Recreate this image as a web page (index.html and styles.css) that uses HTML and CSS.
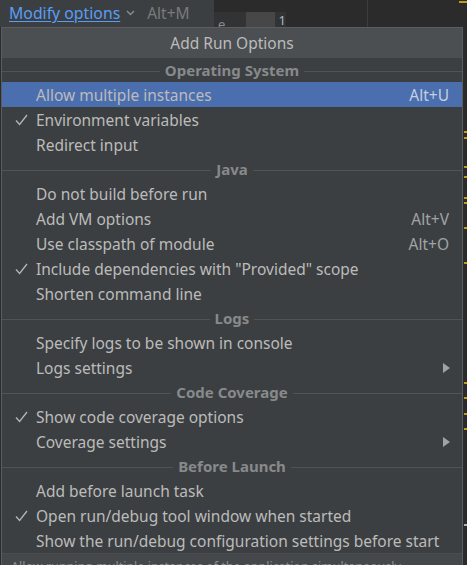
FILE: index.html
```html
<!DOCTYPE html>
<html>
<head>
<meta charset="utf-8">
<link rel="stylesheet" href="styles.css">
</head>
<body>
<div class="screen">
  <div class="topbar">
    <div class="toolpanel">
      <span class="link">Modify options</span>
      <svg class="chev" width="9" height="6" viewBox="0 0 9 6"><path d="M1 1 L4.5 4.5 L8 1" fill="none" stroke="#8a8d90" stroke-width="1.4"/></svg>
      <span class="hint">Alt+M</span>
    </div>
    <div class="editor">
      <div class="field"><span class="glyph">e</span><span class="fill"></span><span class="glyph one">1</span></div>
      <div class="vline"></div>
      <div class="mark top"></div>
    </div>
  </div>
  <div class="rightstrip">
    <i class="y" style="top:104px"></i>
    <i class="y" style="top:110px"></i>
    <i class="y" style="top:139px"></i>
    <i class="y" style="top:149px"></i>
    <i class="y" style="top:170px"></i>
    <i class="y" style="top:175px"></i>
    <i class="y" style="top:200px"></i>
    <i class="y" style="top:235px"></i>
    <i class="y" style="top:355px"></i>
    <i class="y" style="top:370px"></i>
    <i class="y" style="top:386px"></i>
    <i class="y" style="top:401px"></i>
    <i class="w" style="top:497px"></i>
  </div>

  <div class="popup">
    <div class="title">Add Run Options</div>
    <div class="list">
      <div class="sep"><span>Operating System</span></div>
      <div class="item sel"><span class="chk"></span><span class="label">Allow multiple instances</span><span class="key">Alt+U</span></div>
      <div class="item"><span class="chk"><svg width="13" height="12" viewBox="0 0 13 12"><path d="M1 6.5 L4.6 10.5 L12 1" fill="none" stroke="#b4b6b8" stroke-width="1.3"/></svg></span><span class="label">Environment variables</span></div>
      <div class="item"><span class="chk"></span><span class="label">Redirect input</span></div>
      <div class="sep"><span>Java</span></div>
      <div class="item"><span class="chk"></span><span class="label">Do not build before run</span></div>
      <div class="item"><span class="chk"></span><span class="label">Add VM options</span><span class="key">Alt+V</span></div>
      <div class="item"><span class="chk"></span><span class="label">Use classpath of module</span><span class="key">Alt+O</span></div>
      <div class="item"><span class="chk"><svg width="13" height="12" viewBox="0 0 13 12"><path d="M1 6.5 L4.6 10.5 L12 1" fill="none" stroke="#b4b6b8" stroke-width="1.3"/></svg></span><span class="label">Include dependencies with "Provided" scope</span></div>
      <div class="item"><span class="chk"></span><span class="label">Shorten command line</span></div>
      <div class="sep"><span>Logs</span></div>
      <div class="item"><span class="chk"></span><span class="label">Specify logs to be shown in console</span></div>
      <div class="item"><span class="chk"></span><span class="label">Logs settings</span><span class="arrow"></span></div>
      <div class="sep"><span>Code Coverage</span></div>
      <div class="item"><span class="chk"><svg width="13" height="12" viewBox="0 0 13 12"><path d="M1 6.5 L4.6 10.5 L12 1" fill="none" stroke="#b4b6b8" stroke-width="1.3"/></svg></span><span class="label">Show code coverage options</span></div>
      <div class="item"><span class="chk"></span><span class="label">Coverage settings</span><span class="arrow"></span></div>
      <div class="sep"><span>Before Launch</span></div>
      <div class="item"><span class="chk"></span><span class="label">Add before launch task</span></div>
      <div class="item"><span class="chk"><svg width="13" height="12" viewBox="0 0 13 12"><path d="M1 6.5 L4.6 10.5 L12 1" fill="none" stroke="#b4b6b8" stroke-width="1.3"/></svg></span><span class="label">Open run/debug tool window when started</span></div>
      <div class="item"><span class="chk"></span><span class="label">Show the run/debug configuration settings before start</span></div>
    </div>
    <div class="footer">Allow running multiple instances of the application simultaneously.</div>
  </div>
</div>
</body>
</html>
```
FILE: styles.css
```css
html, body {
  margin: 0;
  padding: 0;
  background: #2b2b2b;
}
.screen {
  position: relative;
  width: 467px;
  height: 565px;
  overflow: hidden;
  background: #2b2b2b;
  font-family: "Noto Sans", "Open Sans", sans-serif;
  font-size: 15.5px;
  color: #bbbbbb;
}
.topbar {
  display: flex;
  height: 27px;
}
.toolpanel {
  width: 205px;
  background: #3c3f41;
  display: flex;
  align-items: center;
  padding-left: 9px;
  padding-bottom: 1px;
  box-sizing: content-box;
}
.link {
  color: #589df6;
  text-decoration: underline;
  text-underline-offset: 2px;
  font-size: 15.8px;
}
.chev {
  margin-left: 6px;
  margin-right: 12px;
}
.hint {
  color: #787a7c;
}
.editor {
  flex: 1;
  position: relative;
  display: flex;
}
.field {
  margin-top: 12px;
  width: 72px;
  height: 15px;
  background: #313335;
  display: flex;
  align-items: flex-start;
  overflow: hidden;
}
.field .glyph {
  font-size: 13px;
  line-height: 13px;
  color: #8a8d90;
  margin: 6px 3px 0 4px;
}
.field .fill {
  width: 30px;
  height: 15px;
  background: #474747;
  margin-left: 18px;
}
.field .one {
  margin: 2px 0 0 4px;
  color: #a9b7c6;
}
.vline {
  margin-left: 81px;
  width: 1px;
  background: #3d3d3d;
}
.mark.top {
  position: absolute;
  right: 0;
  top: 1px;
  width: 8px;
  height: 2px;
  background: #c79a14;
}
.rightstrip {
  position: absolute;
  right: 0;
  top: 27px;
  width: 4px;
  height: 538px;
  background: #2b2b2b;
}
.rightstrip i {
  position: absolute;
  right: 0;
  width: 3px;
  height: 2px;
}
.rightstrip .y { background: #c79a14; }
.rightstrip .w { background: #b0b0b0; }

.popup {
  position: absolute;
  left: 1px;
  top: 27px;
  width: 460px;
  height: 545px;
  border: 1px solid #5b5e61;
  background: #3c3f41;
  display: flex;
  flex-direction: column;
}
.title {
  height: 30px;
  flex: none;
  background: #4b4f52;
  display: flex;
  align-items: center;
  justify-content: center;
  color: #bbbbbb;
  font-size: 15.5px;
}
.list {
  display: flex;
  flex-direction: column;
}
.sep {
  height: 24px;
  display: flex;
  align-items: center;
  font-weight: bold;
  font-size: 15px;
  color: #878a8c;
}
.sep::before, .sep::after {
  content: "";
  flex: 1;
  height: 1px;
  background: #515456;
  margin-top: 2px;
}
.sep span {
  padding: 0 5px;
}
.item {
  height: 25px;
  display: flex;
  align-items: center;
  padding-left: 13px;
  padding-right: 13px;
}
.item.sel {
  background: #4b6eaf;
}
.chk {
  width: 21px;
  flex: none;
  display: flex;
  align-items: center;
}
.label {
  flex: 1;
  white-space: nowrap;
}
.key {
  color: #a0a4a8;
}
.item.sel .key {
  color: #c4cfe0;
}
.arrow {
  width: 0;
  height: 0;
  border-top: 5px solid transparent;
  border-bottom: 5px solid transparent;
  border-left: 7px solid #a0a3a6;
  margin-right: -1px;
}
.footer {
  flex: 1;
  border-top: 1px solid #4a4d50;
  background: #45484a;
  color: #8c8f92;
  font-size: 12.5px;
  padding: 4px 9px 0;
  white-space: nowrap;
}
```
